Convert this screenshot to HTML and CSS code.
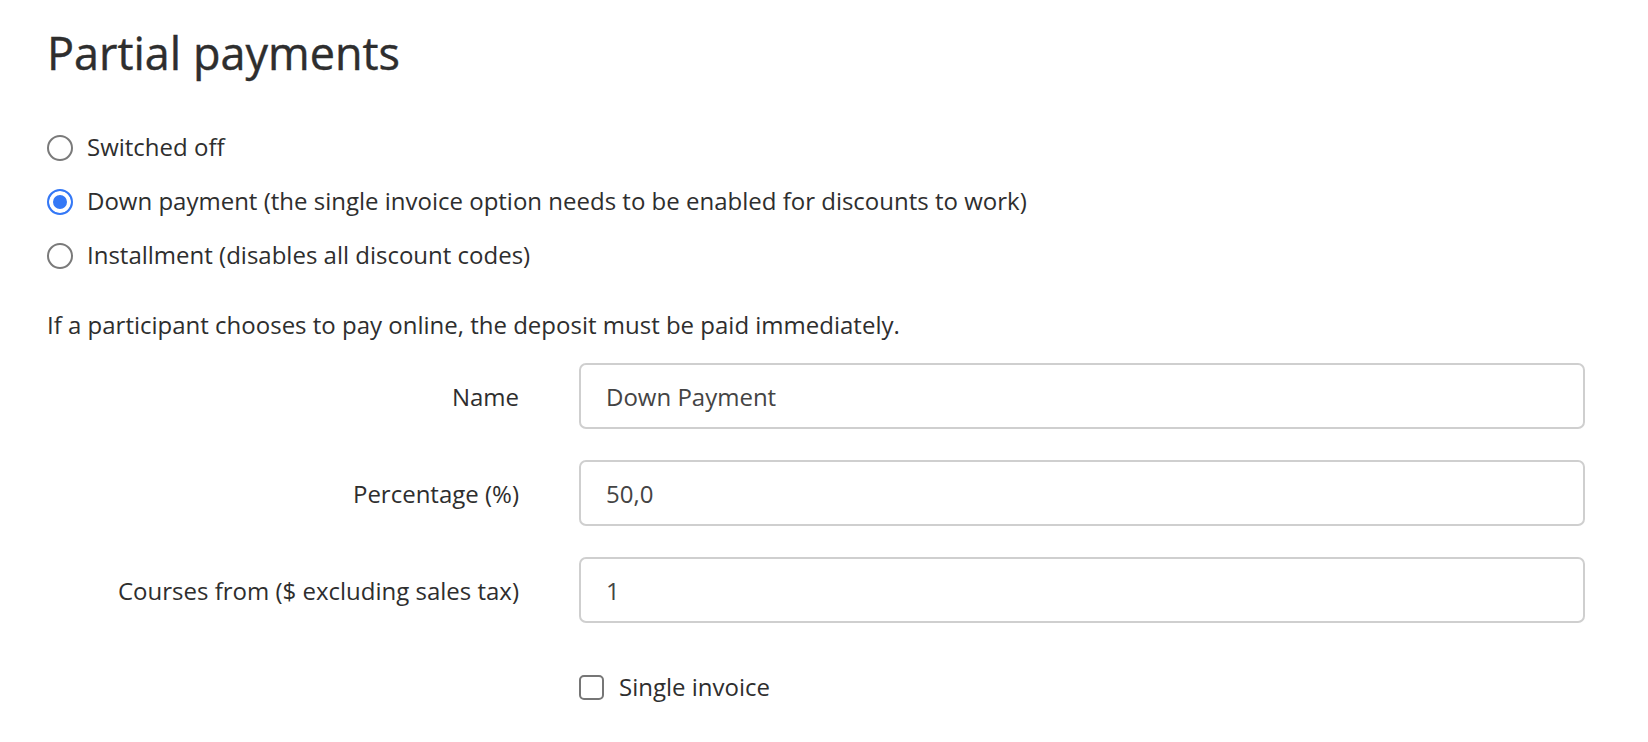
FILE: index.html
```html
<!DOCTYPE html>
<html>
<head>
  <title>Partial payments</title>
  <link rel="stylesheet" href="styles.css">
</head>
<body>
  <div class="container">
    <h1>Partial payments</h1>

    <div class="options">
      <label class="option">
        <input type="radio" name="mode" value="off" />
        <span>Switched off</span>
      </label>
      <label class="option">
        <input type="radio" name="mode" value="down" checked />
        <span>Down payment (the single invoice option needs to be enabled for discounts to work)</span>
      </label>
      <label class="option">
        <input type="radio" name="mode" value="installment" />
        <span>Installment (disables all discount codes)</span>
      </label>
    </div>

    <p class="note">If a participant chooses to pay online, the deposit must be paid immediately.</p>

    <form class="fields">
      <label class="field-label" for="name">Name</label>
      <input class="field-input" id="name" value="Down Payment" />

      <label class="field-label" for="percentage">Percentage (%)</label>
      <input class="field-input" id="percentage" value="50,0" />

      <label class="field-label" for="from">Courses from ($ excluding sales tax)</label>
      <input class="field-input" id="from" value="1" />

      <span></span>
      <label class="check">
        <input type="checkbox" name="single" />
        <span>Single invoice</span>
      </label>
    </form>
  </div>
</body>
</html>
```

FILE: styles.css
```css
* {
  margin: 0;
  padding: 0;
  box-sizing: border-box;
}

body {
  font-family: 'Open Sans', sans-serif;
  background: #fff;
  color: #2e2e2e;
}

.container {
  padding: 22px 63px 0 47px;
}

h1 {
  font-size: 45px;
  font-weight: 400;
  line-height: normal;
  color: #2e2e2e;
  -webkit-text-stroke: 0.4px #2e2e2e;
}

.options {
  display: flex;
  flex-direction: column;
  gap: 22px;
  margin-top: 48px;
}

.option {
  display: flex;
  align-items: center;
  gap: 14px;
  font-size: 24px;
  line-height: 32px;
}

.option input {
  appearance: none;
  width: 26px;
  height: 26px;
  border: 2px solid #7a7a7a;
  border-radius: 50%;
  margin-top: 2px;
  flex-shrink: 0;
}

.option input:checked {
  border-color: #3478f6;
  background: #3478f6;
  box-shadow: inset 0 0 0 4px #fff;
}

.note {
  font-size: 24px;
  line-height: 32px;
  margin-top: 38px;
}

.fields {
  display: grid;
  grid-template-columns: 472px 1fr;
  column-gap: 60px;
  row-gap: 31px;
  align-items: center;
  margin-top: 22px;
}

.field-label {
  text-align: right;
  font-size: 24px;
}

.field-input {
  height: 66px;
  border: 2px solid #cfcfcf;
  border-radius: 7px;
  padding: 0 25px;
  font-family: 'Open Sans', sans-serif;
  font-size: 24px;
  color: #444;
  outline: none;
}

.check {
  display: flex;
  align-items: center;
  gap: 15px;
  font-size: 24px;
  line-height: 32px;
  margin-top: 17px;
}

.check input {
  appearance: none;
  width: 25px;
  height: 25px;
  border: 2px solid #767676;
  border-radius: 5px;
  flex-shrink: 0;
}
```
